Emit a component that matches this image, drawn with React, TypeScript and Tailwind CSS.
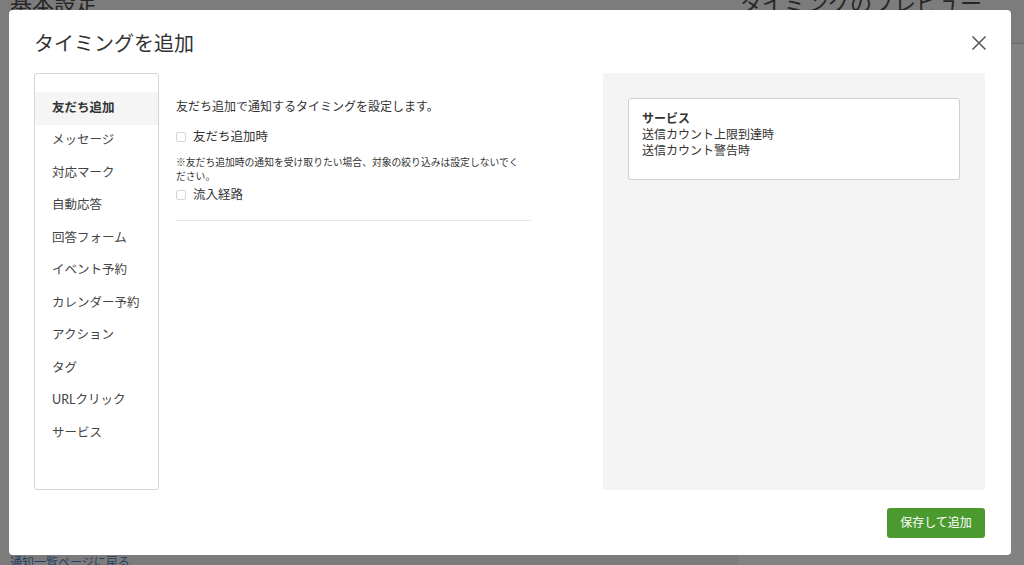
import React from 'react';

const font = { fontFamily: 'Lato, "Noto Sans CJK JP", sans-serif' };

const menuItems = [
  '友だち追加',
  'メッセージ',
  '対応マーク',
  '自動応答',
  '回答フォーム',
  'イベント予約',
  'カレンダー予約',
  'アクション',
  'タグ',
  'URLクリック',
  'サービス',
];

const Checkbox: React.FC<{ label: string }> = ({ label }) => (
  <label className="flex items-center gap-[7px] text-[12.5px] text-[#333]">
    <span className="w-[10px] h-[10px] border border-[#d5d5d5] rounded-[2px] bg-white" />
    {label}
  </label>
);

export default function App() {
  return (
    <div className="relative w-[1024px] h-[565px] overflow-hidden bg-[#7c7c7c]" style={font}>
      {/* page behind the overlay */}
      <div className="flex h-full">
        <div className="flex-1 flex flex-col justify-between px-[10px]">
          <div className="text-[22px] text-[#262626] -mt-[14px]">基本設定</div>
          <div className="text-[12px] text-[#243f63] underline -mb-[7px]">通知一覧ページに戻る</div>
        </div>
        <div className="w-[286px] flex flex-col">
          <div className="h-[43px] text-[22px] text-[#262626] -mt-[14px] pl-[2px]">タイミングのプレビュー</div>
          <div className="flex-1 border-t border-[#6e6e6e] bg-[#828282] mt-[14px]" />
        </div>
      </div>

      {/* modal */}
      <div className="absolute left-[9px] top-[10px] w-[1002px] h-[545px] bg-white rounded-[4px] flex flex-col">
        <div className="flex items-center justify-between pl-[25px] pr-[24px] h-[63px] pt-[2px]">
          <h2 className="text-[20px] text-[#333]">タイミングを追加</h2>
          <svg width="16" height="16" viewBox="0 0 16 16" className="text-[#555]">
            <path d="M1.5 1.5 L14.5 14.5 M14.5 1.5 L1.5 14.5" stroke="currentColor" strokeWidth="1.5" />
          </svg>
        </div>

        <div className="flex pl-[25px] pr-[26px] h-[417px]">
          <div className="w-[125px] border border-[#d6d6d6] rounded-[3px] pt-[18px]">
            {menuItems.map((m, i) => (
              <div
                key={m}
                className={
                  i === 0
                    ? 'h-[32.5px] flex items-center pl-[17px] text-[12.5px] text-[#333] font-bold bg-[#f5f5f5]'
                    : 'h-[32.5px] flex items-center pl-[17px] text-[12.5px] text-[#444]'
                }
              >
                {m}
              </div>
            ))}
          </div>

          <div className="w-[355px] ml-[17px] pt-[25px]">
            <p className="text-[12px] text-[#333]">友だち追加で通知するタイミングを設定します。</p>
            <div className="mt-[12px]">
              <Checkbox label="友だち追加時" />
            </div>
            <p className="mt-[8px] text-[9.8px] leading-[14px] text-[#333] pr-[6px]">
              ※友だち追加時の通知を受け取りたい場合、対象の絞り込みは設定しないでください。
            </p>
            <div className="mt-[3px]">
              <Checkbox label="流入経路" />
            </div>
            <div className="mt-[15px] border-t border-[#e8e8e8]" />
          </div>

          <div className="flex-1 ml-[72px] bg-[#f4f4f4] rounded-[2px] pt-[25px] px-[25px]">
            <div className="bg-white border border-[#cfcfcf] rounded-[3px] h-[82px] px-[13px] pt-[12px] text-[12px] leading-[16px] text-[#333]">
              <div className="font-bold">サービス</div>
              <div>送信カウント上限到達時</div>
              <div>送信カウント警告時</div>
            </div>
          </div>
        </div>

        <div className="flex justify-end pr-[26px] pt-[18px]">
          <button className="w-[98px] h-[30px] bg-[#4b9a2f] rounded-[3px] text-white text-[12px]">
            保存して追加
          </button>
        </div>
      </div>
    </div>
  );
}
